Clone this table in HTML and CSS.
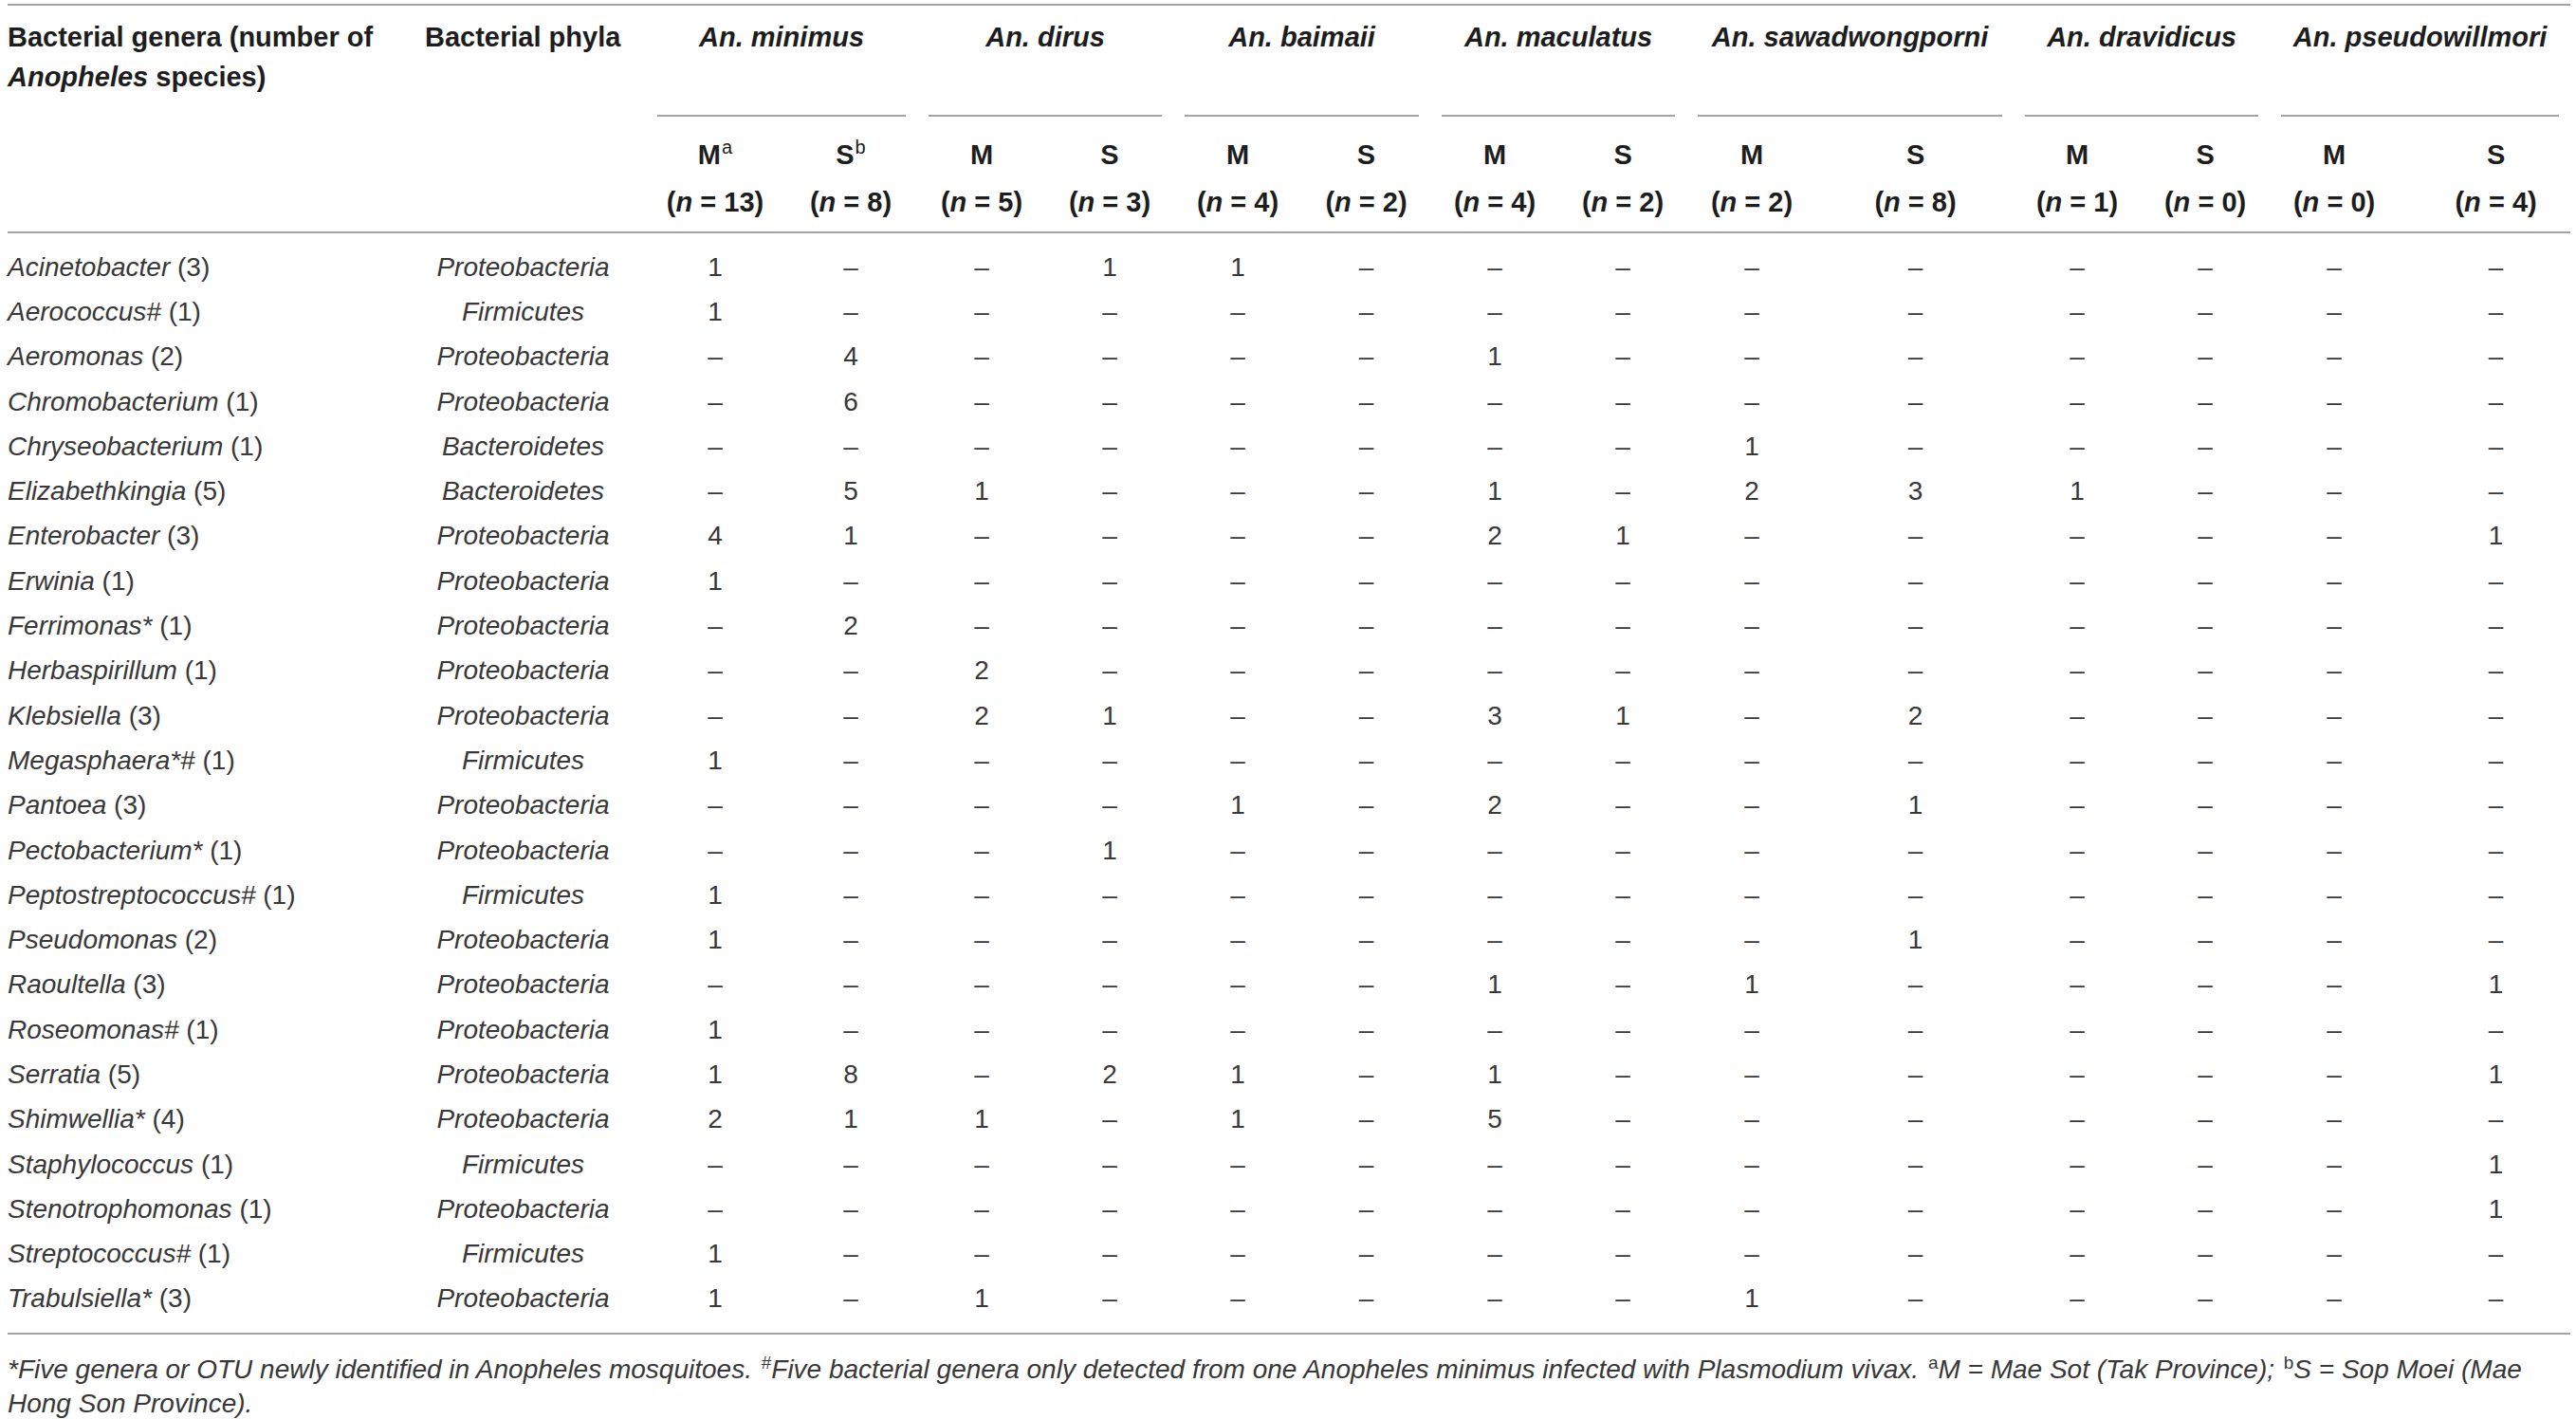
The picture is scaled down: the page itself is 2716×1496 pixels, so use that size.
FILE: index.html
```html
<!DOCTYPE html>
<html lang="en">
<head>
<meta charset="utf-8">
<title>Bacterial genera in Anopheles species</title>
<link rel="stylesheet" href="styles.css">
</head>
<body>
<div class="page">
<table class="tbl">
<colgroup>
<col class="w-gen"><col class="w-phy">
<col class="w146"><col class="w140">
<col class="w136"><col class="w134">
<col class="w136"><col class="w135">
<col class="w136"><col class="w134">
<col class="w138"><col class="w207">
<col class="w134"><col class="w136">
<col class="w136"><col class="w181">
</colgroup>
<thead>
<tr>
<th class="h-gen" rowspan="2">Bacterial genera (number of <i>Anopheles</i> species)</th>
<th class="h-phy" rowspan="2">Bacterial phyla</th>
<th class="h-sp" colspan="2"><div class="grp">An. minimus</div></th>
<th class="h-sp" colspan="2"><div class="grp">An. dirus</div></th>
<th class="h-sp" colspan="2"><div class="grp">An. baimaii</div></th>
<th class="h-sp" colspan="2"><div class="grp">An. maculatus</div></th>
<th class="h-sp" colspan="2"><div class="grp">An. sawadwongporni</div></th>
<th class="h-sp" colspan="2"><div class="grp">An. dravidicus</div></th>
<th class="h-sp" colspan="2"><div class="grp">An. pseudowillmori</div></th>
</tr>
<tr>
<th class="h-ms">M<sup>a</sup><br>(<i>n</i> = 13)</th>
<th class="h-ms">S<sup>b</sup><br>(<i>n</i> = 8)</th>
<th class="h-ms">M<br>(<i>n</i> = 5)</th>
<th class="h-ms">S<br>(<i>n</i> = 3)</th>
<th class="h-ms">M<br>(<i>n</i> = 4)</th>
<th class="h-ms">S<br>(<i>n</i> = 2)</th>
<th class="h-ms">M<br>(<i>n</i> = 4)</th>
<th class="h-ms">S<br>(<i>n</i> = 2)</th>
<th class="h-ms">M<br>(<i>n</i> = 2)</th>
<th class="h-ms">S<br>(<i>n</i> = 8)</th>
<th class="h-ms">M<br>(<i>n</i> = 1)</th>
<th class="h-ms">S<br>(<i>n</i> = 0)</th>
<th class="h-ms">M<br>(<i>n</i> = 0)</th>
<th class="h-ms last">S<br>(<i>n</i> = 4)</th>
</tr>
</thead>
<tbody>
<tr><td class="gen"><i>Acinetobacter</i> (3)</td><td class="phy">Proteobacteria</td><td>1</td><td>–</td><td>–</td><td>1</td><td>1</td><td>–</td><td>–</td><td>–</td><td>–</td><td>–</td><td>–</td><td>–</td><td>–</td><td class="last">–</td></tr>
<tr><td class="gen"><i>Aerococcus#</i> (1)</td><td class="phy">Firmicutes</td><td>1</td><td>–</td><td>–</td><td>–</td><td>–</td><td>–</td><td>–</td><td>–</td><td>–</td><td>–</td><td>–</td><td>–</td><td>–</td><td class="last">–</td></tr>
<tr><td class="gen"><i>Aeromonas</i> (2)</td><td class="phy">Proteobacteria</td><td>–</td><td>4</td><td>–</td><td>–</td><td>–</td><td>–</td><td>1</td><td>–</td><td>–</td><td>–</td><td>–</td><td>–</td><td>–</td><td class="last">–</td></tr>
<tr><td class="gen"><i>Chromobacterium</i> (1)</td><td class="phy">Proteobacteria</td><td>–</td><td>6</td><td>–</td><td>–</td><td>–</td><td>–</td><td>–</td><td>–</td><td>–</td><td>–</td><td>–</td><td>–</td><td>–</td><td class="last">–</td></tr>
<tr><td class="gen"><i>Chryseobacterium</i> (1)</td><td class="phy">Bacteroidetes</td><td>–</td><td>–</td><td>–</td><td>–</td><td>–</td><td>–</td><td>–</td><td>–</td><td>1</td><td>–</td><td>–</td><td>–</td><td>–</td><td class="last">–</td></tr>
<tr><td class="gen"><i>Elizabethkingia</i> (5)</td><td class="phy">Bacteroidetes</td><td>–</td><td>5</td><td>1</td><td>–</td><td>–</td><td>–</td><td>1</td><td>–</td><td>2</td><td>3</td><td>1</td><td>–</td><td>–</td><td class="last">–</td></tr>
<tr><td class="gen"><i>Enterobacter</i> (3)</td><td class="phy">Proteobacteria</td><td>4</td><td>1</td><td>–</td><td>–</td><td>–</td><td>–</td><td>2</td><td>1</td><td>–</td><td>–</td><td>–</td><td>–</td><td>–</td><td class="last">1</td></tr>
<tr><td class="gen"><i>Erwinia</i> (1)</td><td class="phy">Proteobacteria</td><td>1</td><td>–</td><td>–</td><td>–</td><td>–</td><td>–</td><td>–</td><td>–</td><td>–</td><td>–</td><td>–</td><td>–</td><td>–</td><td class="last">–</td></tr>
<tr><td class="gen"><i>Ferrimonas*</i> (1)</td><td class="phy">Proteobacteria</td><td>–</td><td>2</td><td>–</td><td>–</td><td>–</td><td>–</td><td>–</td><td>–</td><td>–</td><td>–</td><td>–</td><td>–</td><td>–</td><td class="last">–</td></tr>
<tr><td class="gen"><i>Herbaspirillum</i> (1)</td><td class="phy">Proteobacteria</td><td>–</td><td>–</td><td>2</td><td>–</td><td>–</td><td>–</td><td>–</td><td>–</td><td>–</td><td>–</td><td>–</td><td>–</td><td>–</td><td class="last">–</td></tr>
<tr><td class="gen"><i>Klebsiella</i> (3)</td><td class="phy">Proteobacteria</td><td>–</td><td>–</td><td>2</td><td>1</td><td>–</td><td>–</td><td>3</td><td>1</td><td>–</td><td>2</td><td>–</td><td>–</td><td>–</td><td class="last">–</td></tr>
<tr><td class="gen"><i>Megasphaera*#</i> (1)</td><td class="phy">Firmicutes</td><td>1</td><td>–</td><td>–</td><td>–</td><td>–</td><td>–</td><td>–</td><td>–</td><td>–</td><td>–</td><td>–</td><td>–</td><td>–</td><td class="last">–</td></tr>
<tr><td class="gen"><i>Pantoea</i> (3)</td><td class="phy">Proteobacteria</td><td>–</td><td>–</td><td>–</td><td>–</td><td>1</td><td>–</td><td>2</td><td>–</td><td>–</td><td>1</td><td>–</td><td>–</td><td>–</td><td class="last">–</td></tr>
<tr><td class="gen"><i>Pectobacterium*</i> (1)</td><td class="phy">Proteobacteria</td><td>–</td><td>–</td><td>–</td><td>1</td><td>–</td><td>–</td><td>–</td><td>–</td><td>–</td><td>–</td><td>–</td><td>–</td><td>–</td><td class="last">–</td></tr>
<tr><td class="gen"><i>Peptostreptococcus#</i> (1)</td><td class="phy">Firmicutes</td><td>1</td><td>–</td><td>–</td><td>–</td><td>–</td><td>–</td><td>–</td><td>–</td><td>–</td><td>–</td><td>–</td><td>–</td><td>–</td><td class="last">–</td></tr>
<tr><td class="gen"><i>Pseudomonas</i> (2)</td><td class="phy">Proteobacteria</td><td>1</td><td>–</td><td>–</td><td>–</td><td>–</td><td>–</td><td>–</td><td>–</td><td>–</td><td>1</td><td>–</td><td>–</td><td>–</td><td class="last">–</td></tr>
<tr><td class="gen"><i>Raoultella</i> (3)</td><td class="phy">Proteobacteria</td><td>–</td><td>–</td><td>–</td><td>–</td><td>–</td><td>–</td><td>1</td><td>–</td><td>1</td><td>–</td><td>–</td><td>–</td><td>–</td><td class="last">1</td></tr>
<tr><td class="gen"><i>Roseomonas#</i> (1)</td><td class="phy">Proteobacteria</td><td>1</td><td>–</td><td>–</td><td>–</td><td>–</td><td>–</td><td>–</td><td>–</td><td>–</td><td>–</td><td>–</td><td>–</td><td>–</td><td class="last">–</td></tr>
<tr><td class="gen"><i>Serratia</i> (5)</td><td class="phy">Proteobacteria</td><td>1</td><td>8</td><td>–</td><td>2</td><td>1</td><td>–</td><td>1</td><td>–</td><td>–</td><td>–</td><td>–</td><td>–</td><td>–</td><td class="last">1</td></tr>
<tr><td class="gen"><i>Shimwellia*</i> (4)</td><td class="phy">Proteobacteria</td><td>2</td><td>1</td><td>1</td><td>–</td><td>1</td><td>–</td><td>5</td><td>–</td><td>–</td><td>–</td><td>–</td><td>–</td><td>–</td><td class="last">–</td></tr>
<tr><td class="gen"><i>Staphylococcus</i> (1)</td><td class="phy">Firmicutes</td><td>–</td><td>–</td><td>–</td><td>–</td><td>–</td><td>–</td><td>–</td><td>–</td><td>–</td><td>–</td><td>–</td><td>–</td><td>–</td><td class="last">1</td></tr>
<tr><td class="gen"><i>Stenotrophomonas</i> (1)</td><td class="phy">Proteobacteria</td><td>–</td><td>–</td><td>–</td><td>–</td><td>–</td><td>–</td><td>–</td><td>–</td><td>–</td><td>–</td><td>–</td><td>–</td><td>–</td><td class="last">1</td></tr>
<tr><td class="gen"><i>Streptococcus#</i> (1)</td><td class="phy">Firmicutes</td><td>1</td><td>–</td><td>–</td><td>–</td><td>–</td><td>–</td><td>–</td><td>–</td><td>–</td><td>–</td><td>–</td><td>–</td><td>–</td><td class="last">–</td></tr>
<tr><td class="gen"><i>Trabulsiella*</i> (3)</td><td class="phy">Proteobacteria</td><td>1</td><td>–</td><td>1</td><td>–</td><td>–</td><td>–</td><td>–</td><td>–</td><td>1</td><td>–</td><td>–</td><td>–</td><td>–</td><td class="last">–</td></tr>
</tbody>
</table>
<p class="note"><span>*Five genera or OTU newly identified in Anopheles mosquitoes.</span> <sup>#</sup><span>Five bacterial genera only detected from one Anopheles minimus infected with Plasmodium vivax.</span> <sup>a</sup><span>M = Mae Sot (Tak Province);</span> <sup>b</sup><span>S = Sop Moei (Mae</span> <span>Hong Son Province).</span></p>
</div>
</body>
</html>
```
FILE: styles.css
```css
html, body {
  margin: 0;
  background: #ffffff;
}

body {
  font-family: "Liberation Sans", Arial, Helvetica, sans-serif;
  color: #383838;
}

.page {
  padding: 4px 6px 0 8px;
}

.tbl {
  width: 2702px;
  table-layout: fixed;
  border-collapse: separate;
  border-spacing: 0;
  border-top: 2px solid #a3a3a3;
}

.w-gen { width: 428px; }
.w-phy { width: 245px; }
.w146 { width: 146px; }
.w140 { width: 140px; }
.w136 { width: 136px; }
.w135 { width: 135px; }
.w134 { width: 134px; }
.w138 { width: 138px; }
.w207 { width: 207px; }
.w181 { width: 181px; }

thead th {
  font-size: 29px;
  font-weight: bold;
  color: #1d1d1d;
  line-height: 42px;
  padding: 0;
  vertical-align: top;
  text-align: center;
}

.h-gen {
  text-align: left;
  padding-top: 12px;
  border-bottom: 2px solid #a3a3a3;
}

.h-phy {
  text-align: left;
  padding: 12px 0 0 12px;
  border-bottom: 2px solid #a3a3a3;
}

.h-sp {
  padding: 12px 12px 0;
  font-style: italic;
}

.h-sp .grp {
  padding-bottom: 61px;
  border-bottom: 2px solid #a3a3a3;
}

.h-ms {
  padding: 15px 0 6px;
  line-height: 50px;
  border-bottom: 2px solid #a3a3a3;
}

.h-ms sup {
  font-size: 20px;
  font-weight: normal;
  line-height: 0;
  vertical-align: 11px;
  margin-left: 1px;
}

.h-ms.last {
  padding-left: 24px;
}

tbody tr {
  height: 47.3px;
}

tbody tr:first-child {
  height: 59.3px;
}

tbody tr:last-child {
  height: 61.3px;
}

tbody td {
  font-size: 28px;
  line-height: 32px;
  padding: 0;
  text-align: center;
  vertical-align: middle;
  white-space: nowrap;
}

tbody td.gen {
  text-align: left;
}

tbody td.phy {
  font-style: italic;
  padding-left: 12px;
  padding-right: 26px;
}

tbody td.last {
  padding-left: 24px;
}

tbody tr:first-child td {
  padding-top: 12px;
}

tbody tr:last-child td {
  padding-bottom: 12px;
  border-bottom: 2px solid #a3a3a3;
}

.note {
  width: 2702px;
  margin: 19px 0 0;
  font-size: 28px;
  line-height: 36px;
  font-style: italic;
  color: #383838;
}

.note sup {
  font-size: 19px;
  font-style: normal;
  line-height: 0;
  vertical-align: 10px;
  margin-left: 2px;
}
```
